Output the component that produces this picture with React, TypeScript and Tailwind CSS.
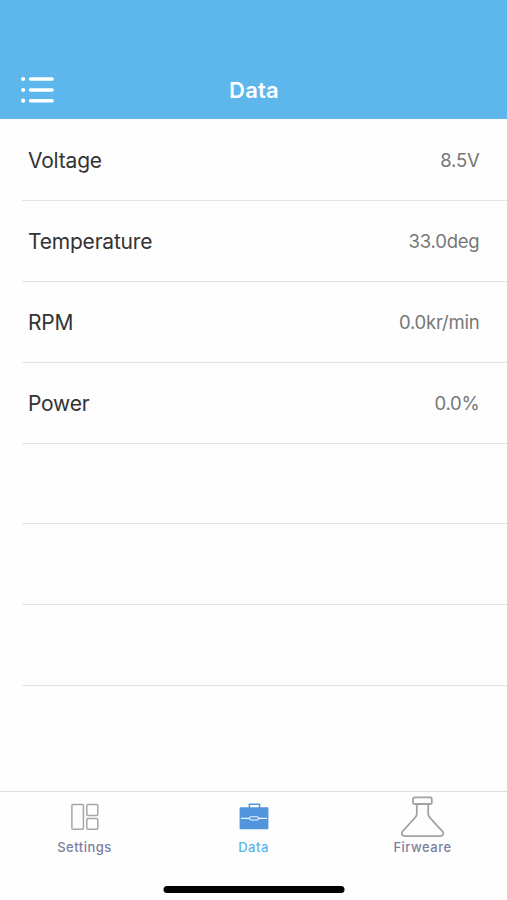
const rows = [
  { label: 'Voltage', value: '8.5V' },
  { label: 'Temperature', value: '33.0deg' },
  { label: 'RPM', value: '0.0kr/min' },
  { label: 'Power', value: '0.0%' },
  { label: '', value: '' },
  { label: '', value: '' },
  { label: '', value: '' },
];

function MenuIcon() {
  return (
    <svg width="34" height="28" viewBox="0 0 34 28" fill="none" stroke="#fff" strokeLinecap="round">
      <path d="M9.5 3h21.6M9.5 14h21.6M9.5 24.7h21.6" strokeWidth="3.5" />
      <path d="M2.2 3h.01M2.2 14h.01M2.2 24.7h.01" strokeWidth="4.2" />
    </svg>
  );
}

function SettingsIcon() {
  return (
    <svg width="44" height="44" viewBox="0 0 44 44" fill="none" stroke="#a3a7a9" strokeWidth="1.5">
      <rect x="8.9" y="9.5" width="11.5" height="24.7" rx="1" />
      <rect x="23.8" y="9.5" width="11" height="11" rx="1" />
      <rect x="23.8" y="23.5" width="11" height="10.7" rx="1" />
    </svg>
  );
}

function BriefcaseIcon() {
  return (
    <svg width="44" height="44" viewBox="0 0 44 44" fill="none">
      <path d="M17.4 13V9.2h10.2V13" stroke="#5595d7" strokeWidth="1.5" />
      <rect x="7.6" y="12.3" width="28.8" height="21.9" rx=".6" fill="#5196dc" />
      <path d="M9 23.4h8.5M26.5 23.4h8.5" stroke="#eef6ff" strokeWidth="1.2" />
      <rect x="17.5" y="21.8" width="9" height="3.2" rx="1.5" stroke="#eef6ff" strokeWidth="1.1" />
    </svg>
  );
}

function FlaskIcon() {
  return (
    <svg width="44" height="44" viewBox="0 0 44 44" fill="none" stroke="#a0a3a6" strokeWidth="1.8" strokeLinejoin="round">
      <rect x="12" y="2.4" width="18.8" height="6.6" rx="1.8" />
      <path d="M15.8 9v9.8q0 1.4-.8 2.6Q14.4 22.5 2 35.9C-.4 38.5 1 41.1 4 41.1h35c3.2 0 4.4-2.6 2.1-5.2Q29 22.9 28 21.4q-.8-1.2-.8-2.6V9" />
    </svg>
  );
}

const tabs = [
  { name: 'Settings', Icon: SettingsIcon, style: 'text-[#7d7e9d]' },
  { name: 'Data', Icon: BriefcaseIcon, style: 'text-[#5cb5e8]' },
  { name: 'Firweare', Icon: FlaskIcon, style: 'text-[#7d7e9d]' },
];

export default function App() {
  return (
    <div className="flex h-[900px] w-[507px] flex-col overflow-hidden bg-[#fefefe] font-['Inter',sans-serif]">
      <header className="grid h-[119.4px] shrink-0 grid-cols-3 items-end bg-[#5eb7ec] text-white">
        <button aria-label="Menu" className="mb-[15.4px] ml-[21px] w-[34px]"><MenuIcon /></button>
        <h1 className="mb-[14.5px] pl-px text-center text-[22px] leading-[30px] font-semibold tracking-[0.2px]">Data</h1>
      </header>
      <main className="flex-1 pt-px">
        {rows.map((row, i) => (
          <div key={i} className="ml-[22px] flex h-[80.8px] items-center justify-between border-b border-[#e4e4e6] pt-[1.6px] pr-[27.5px] pl-[6px]">
            <span className="text-[21px] tracking-[-0.2px] text-[#333]">{row.label}</span>
            <span className="text-[18.5px] tracking-[-0.22px] text-[#777]">{row.value}</span>
          </div>
        ))}
      </main>
      <nav className="flex h-[109px] shrink-0 flex-col border-t border-[#dcdcde]">
        <div className="grid grid-cols-3">
          {tabs.map(({ name, Icon, style }) => (
            <div key={name} className={'flex flex-col items-center pt-[3px] ' + style}>
              <Icon />
              <span className="-mt-px text-[13px] leading-[18px] font-medium tracking-[0.5px]">{name}</span>
            </div>
          ))}
        </div>
        <div className="mx-auto mt-auto mb-[7.5px] h-[7px] w-[181px] translate-x-[0.5px] rounded-full bg-black" />
      </nav>
    </div>
  );
}
